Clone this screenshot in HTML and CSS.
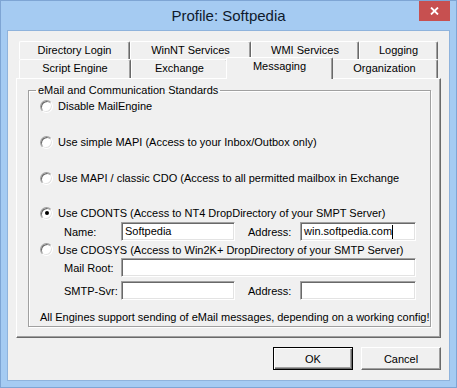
FILE: index.html
```html
<!DOCTYPE html>
<html lang="en">
<head>
  <meta charset="UTF-8">
  <title>Profile: Softpedia</title>
  <link rel="stylesheet" href="styles.css">
</head>
<body>
<div class="window">
  <!-- TITLE BAR -->
  <div class="titlebar">
    <span class="title">Profile: Softpedia</span>
    <button class="close" aria-label="Close">
      <svg width="9" height="8" viewBox="0 0 9 8"><path d="M1 0.5 L8 7.5 M8 0.5 L1 7.5" stroke="#fff" stroke-width="1.8"/></svg>
    </button>
  </div>

  <!-- CLIENT -->
  <div class="client">
    <div class="tabctl">
      <div class="tabrow">
        <div class="tab w-dir">Directory Login</div>
        <div class="tab w-nt">WinNT Services</div>
        <div class="tab w-wmi">WMI Services</div>
        <div class="tab w-log">Logging</div>
      </div>
      <div class="tabrow row2">
        <div class="tab w-script">Script Engine</div>
        <div class="tab w-exch">Exchange</div>
        <div class="tab w-msg selected">Messaging</div>
        <div class="tab w-org">Organization</div>
      </div>
      <div class="panel">
        <fieldset class="group">
          <legend>eMail and Communication Standards</legend>
          <div class="opt gap18"><span class="radio"></span>Disable MailEngine</div>
          <div class="opt gap18"><span class="radio"></span>Use simple MAPI (Access to your Inbox/Outbox only)</div>
          <div class="opt gap17"><span class="radio"></span>Use MAPI / classic CDO (Access to all permitted mailbox in Exchange</div>
          <div class="opt"><span class="radio checked"></span>Use CDONTS (Access to NT4 DropDirectory of your SMPT Server)</div>
          <div class="field">
            <span class="lbl">Name:</span>
            <div class="edit short">Softpedia</div>
            <span class="lbl addr">Address:</span>
            <div class="edit addr-edit">win.softpedia.com<span class="caret"></span></div>
          </div>
          <div class="opt small"><span class="radio"></span>Use CDOSYS (Access to Win2K+ DropDirectory of your SMTP Server)</div>
          <div class="field">
            <span class="lbl">Mail Root:</span>
            <div class="edit long"></div>
          </div>
          <div class="field smtp">
            <span class="lbl">SMTP-Svr:</span>
            <div class="edit short"></div>
            <span class="lbl addr">Address:</span>
            <div class="edit addr-edit"></div>
          </div>
          <div class="note">All Engines support sending of eMail messages, depending on a working config!</div>
        </fieldset>
      </div>
    </div>

    <div class="buttons">
      <button class="btn default">OK</button>
      <button class="btn">Cancel</button>
    </div>
  </div>
</div>
</body>
</html>
```

FILE: styles.css
```css
:root{
  --frame:#a5cbf2;
  --frame-edge:#7ea5d4;
  --face:#f0f0f0;
  --hilite:#ffffff;
  --shadow:#a0a0a0;
  --dark:#696969;
  --light:#e3e3e3;
}
*{box-sizing:border-box;margin:0;padding:0}
body{background:var(--frame);font-family:'Liberation Sans',Arial,sans-serif;font-size:11px;color:#000}

/* ---------- window frame ---------- */
.window{width:457px;height:388px;background:var(--frame);border:1px solid var(--frame-edge);padding:0 7px 7px;display:flex;flex-direction:column}
.titlebar{height:30px;display:grid;grid-template-columns:1fr auto 1fr;align-items:start}
.title{grid-column:2;font-size:15px;line-height:29px;color:#0f1a2c;white-space:nowrap}
.close{grid-column:3;justify-self:end;margin-right:-1px;width:31px;height:20px;border:none;background:#c75050;display:flex;align-items:center;justify-content:center}
.client{flex:1;background:var(--face);box-shadow:0 0 0 1px #8fb3dc;display:flex;flex-direction:column}

/* ---------- tabs ---------- */
.tabctl{margin:10px 0 0 8px;width:425px}
.tabrow{display:flex;height:18px;padding-left:3px}
.tabrow.row2{height:19px;align-items:flex-end}
.tab{height:100%;background:var(--face);border-top:1px solid var(--hilite);border-left:1px solid var(--hilite);border-right:1px solid var(--dark);box-shadow:inset -1px 0 var(--shadow);border-radius:2px 2px 0 0;text-align:center;line-height:16px;white-space:nowrap}
.row2 .tab{line-height:17px}
.tab.selected{position:relative;z-index:2;height:22px;margin:0 -2px -1px;line-height:17px}
.w-dir{width:111px}
.w-nt{width:121px}
.w-wmi{width:108px}
.w-log{width:79px}
.w-script{width:112px}
.w-exch{width:97px}
.w-msg{width:107px}
.w-org{width:107px}

.panel{height:260px;background:var(--face);border:1px solid;border-color:var(--hilite) var(--dark) var(--dark) var(--hilite);box-shadow:inset -1px -1px var(--shadow);padding:5px 12px 0 11px}

/* ---------- group box ---------- */
.group{height:243px;border:1px solid var(--shadow);box-shadow:1px 1px 0 var(--hilite),inset 1px 1px 0 var(--hilite);padding:0}
.group legend{margin-left:7px;padding:0 2px;line-height:13px}
.opt{height:18px;display:flex;align-items:center;padding-left:11px;white-space:nowrap}
.opt.gap18{margin-bottom:18px}
.opt.gap17{margin-bottom:17px}
.opt.small{height:17px}
.radio{width:13px;height:13px;margin-right:5px;border-radius:50%;background:#fff;border:1px solid;border-color:var(--shadow) var(--hilite) var(--hilite) var(--shadow);box-shadow:inset 1px 1px var(--dark),inset -1px -1px var(--light);display:flex;align-items:center;justify-content:center;flex:none}
.radio.checked::after{content:'';width:4px;height:4px;border-radius:50%;background:#000}

.field{height:19px;display:flex;align-items:center;padding-left:35px}
.field.smtp{margin-top:4px}
.lbl{width:57px;white-space:nowrap}
.lbl.addr{width:52px;margin-left:13px}
.edit{height:19px;background:#fff;border:1px solid;border-color:var(--shadow) var(--hilite) var(--hilite) var(--shadow);box-shadow:inset 1px 1px var(--dark),inset -1px -1px var(--light);padding-left:3px;line-height:17px;white-space:nowrap;display:flex;align-items:center}
.edit.short{width:114px}
.edit.addr-edit{width:116px}
.edit.long{width:295px}
.caret{width:1px;height:14px;background:#000}
.note{margin-top:11px;padding-left:11px;line-height:13px;white-space:nowrap}

/* ---------- buttons ---------- */
.buttons{width:425px;margin:9px 0 0 8px;display:flex;justify-content:flex-end;gap:8px}
.btn{width:80px;height:23px;background:var(--face);font:inherit;color:#000;border:1px solid;border-color:var(--hilite) var(--dark) var(--dark) var(--hilite);box-shadow:inset -1px -1px var(--shadow)}
.btn.default{border-color:#000;box-shadow:inset 1px 1px var(--hilite),inset -1px -1px var(--dark),inset -2px -2px var(--shadow)}
```
